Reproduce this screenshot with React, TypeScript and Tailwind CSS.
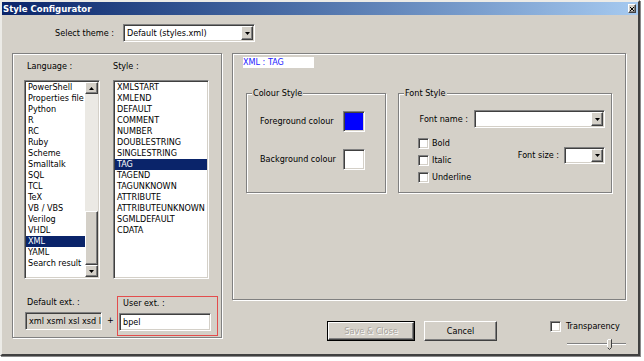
import React from "react";

const SUNKEN =
  "border border-t-[#808080] border-l-[#808080] border-b-white border-r-white shadow-[inset_1px_1px_0_#404040,inset_-1px_-1px_0_#d4d0c8]";
const RAISED =
  "border border-t-white border-l-white border-b-[#404040] border-r-[#404040] shadow-[inset_-1px_-1px_0_#808080]";
const ETCHED =
  "border border-[#808080] shadow-[inset_1px_1px_0_#ffffff,1px_1px_0_#ffffff]";

function Tri({ up = false }: { up?: boolean }) {
  return (
    <svg width="5" height="3" viewBox="0 0 5 3">
      <path d={up ? "M0 3H5L2.5 0Z" : "M0 0H5L2.5 3Z"} fill="#000" />
    </svg>
  );
}

function Combo({ size, text = "" }: { size: string; text?: string }) {
  return (
    <div className={`${SUNKEN} ${size} bg-white flex items-stretch p-[1px]`}>
      <span className="flex-1 pl-[2px] whitespace-nowrap overflow-hidden self-center">{text}</span>
      <div className={`${RAISED} bg-[#d4d0c8] w-[12px] flex items-center justify-center`}>
        <Tri />
      </div>
    </div>
  );
}

function Check() {
  return <div className={`${SUNKEN} bg-white w-[11px] h-[11px] shrink-0`} />;
}

function ListBox({
  size,
  items,
  sel,
  scroll = false,
}: {
  size: string;
  items: string[];
  sel: string;
  scroll?: boolean;
}) {
  return (
    <div className={`${SUNKEN} ${size} bg-white flex p-[1px] overflow-hidden`}>
      <div className="flex-1 flex flex-col overflow-hidden">
        {items.map((it) => (
          <div
            key={it}
            className={`h-[11px] leading-[11px] pl-[2px] whitespace-nowrap ${
              it === sel ? "bg-[#0a246a] text-white" : ""
            }`}
          >
            {it}
          </div>
        ))}
      </div>
      {scroll && (
        <div className="w-[13px] flex flex-col bg-[#ebe9e4]">
          <div className={`${RAISED} bg-[#d4d0c8] h-[12px] flex items-center justify-center`}>
            <Tri up />
          </div>
          <div className="flex-1 flex flex-col justify-end">
            <div className={`${RAISED} bg-[#d4d0c8] h-[54px]`} />
          </div>
          <div className={`${RAISED} bg-[#d4d0c8] h-[12px] flex items-center justify-center`}>
            <Tri />
          </div>
        </div>
      )}
    </div>
  );
}

const LANGS = [
  "PowerShell",
  "Properties file",
  "Python",
  "R",
  "RC",
  "Ruby",
  "Scheme",
  "Smalltalk",
  "SQL",
  "TCL",
  "TeX",
  "VB / VBS",
  "Verilog",
  "VHDL",
  "XML",
  "YAML",
  "Search result",
];

const STYLES = [
  "XMLSTART",
  "XMLEND",
  "DEFAULT",
  "COMMENT",
  "NUMBER",
  "DOUBLESTRING",
  "SINGLESTRING",
  "TAG",
  "TAGEND",
  "TAGUNKNOWN",
  "ATTRIBUTE",
  "ATTRIBUTEUNKNOWN",
  "SGMLDEFAULT",
  "CDATA",
];

export default function App() {
  return (
    <div className="w-[644px] h-[361px] bg-white font-['DejaVu_Sans_Condensed','Liberation_Sans',Arial,sans-serif] text-[9px] leading-[11px] text-black overflow-hidden">
      <div className="w-[640px] h-[356px] bg-[#d4d0c8] border-2 border-t-[#ecebe7] border-l-[#ecebe7] border-r-[#404040] border-b-[#404040] shadow-[1px_1px_0_#8a8a8a] flex flex-col overflow-hidden">
        {/* title bar */}
        <div className="h-[13px] bg-gradient-to-r from-[#0a246a] to-[#a6caf0] flex items-center justify-between pl-[1px] pr-[2px] shrink-0">
          <span className="text-white font-bold text-[9.5px] leading-[13px]">Style Configurator</span>
          <div className={`${RAISED} bg-[#d4d0c8] w-[8px] h-[9px] flex items-center justify-center`}>
            <svg width="4" height="4" viewBox="0 0 4 4">
              <path d="M0 0L4 4M4 0L0 4" stroke="#000" strokeWidth="1" />
            </svg>
          </div>
        </div>

        {/* theme row */}
        <div className="flex items-center mt-[9px] pl-[53px] shrink-0">
          <span className="w-[68px]">Select theme :</span>
          <Combo size="w-[132px] h-[18px]" text="Default (styles.xml)" />
        </div>

        {/* main */}
        <div className="flex gap-[10px] pl-[10px] mt-[11px]">
          {/* left panel */}
          <div className={`${ETCHED} w-[210px] h-[285px] flex flex-col pl-[11px] pt-[7px]`}>
            <div className="flex gap-[13px]">
              <div className="flex flex-col w-[76px]">
                <span className="h-[11px] pl-[3px]">Language :</span>
                <div className="mt-[8px]">
                  <ListBox size="w-[76px] h-[199px]" items={LANGS} sel="XML" scroll />
                </div>
              </div>
              <div className="flex flex-col w-[96px]">
                <span className="h-[11px]">Style :</span>
                <div className="mt-[8px]">
                  <ListBox size="w-[96px] h-[199px]" items={STYLES} sel="TAG" />
                </div>
              </div>
            </div>
            <div className="flex items-start mt-[17px]">
              <div className="flex flex-col w-[77px] ml-[1px] mt-[1px]">
                <span className="h-[11px] pl-[2px]">Default ext. :</span>
                <div
                  className={`${SUNKEN} mt-[4px] w-[77px] h-[18px] bg-[#d4d0c8] pl-[3px] leading-[16px] whitespace-nowrap overflow-hidden`}
                >
                  xml xsml xsl xsd l
                </div>
              </div>
              <span className="ml-[5px] mt-[19px] w-[7px] text-[9px]">+</span>
              <div className="ml-[3px] w-[101px] h-[40px] border border-[#e34d4d] pl-[1px] pt-[1px] flex flex-col">
                <span className="h-[11px] pl-[4px]">User ext. :</span>
                <div className={`${SUNKEN} mt-[4px] w-[92px] h-[18px] bg-white pl-[3px] leading-[16px]`}>
                  bpel
                </div>
              </div>
            </div>
          </div>

          {/* right column */}
          <div className="flex flex-col w-[394px]">
            <div className={`${ETCHED} h-[247px] flex flex-col`}>
              <div className="ml-[10px] mt-[3px] w-[71px] h-[11px] bg-white text-[#2222ff] leading-[11px]">
                XML : TAG
              </div>
              <div className="flex gap-[12px] pl-[13px] mt-[25px]">
                {/* colour style */}
                <div className={`${ETCHED} relative w-[140px] h-[100px] flex flex-col pl-[13px] pt-[17px] gap-[17px]`}>
                  <span className="absolute left-[5px] top-[-6px] px-[1px] bg-[#d4d0c8]">Colour Style</span>
                  <div className="flex items-center">
                    <span className="w-[83px]">Foreground colour</span>
                    <div className={`${SUNKEN} w-[22px] h-[21px] bg-[#0000ff]`} />
                  </div>
                  <div className="flex items-center">
                    <span className="w-[83px]">Background colour</span>
                    <div className={`${SUNKEN} w-[22px] h-[21px] bg-white`} />
                  </div>
                </div>
                {/* font style */}
                <div className={`${ETCHED} relative w-[214px] h-[100px] flex flex-col pt-[16px]`}>
                  <span className="absolute left-[5px] top-[-6px] px-[1px] bg-[#d4d0c8]">Font Style</span>
                  <div className="flex justify-end items-center gap-[6px] pr-[6px]">
                    <span>Font name :</span>
                    <Combo size="w-[131px] h-[18px]" />
                  </div>
                  <div className="flex mt-[10px]">
                    <div className="flex flex-col gap-[6px] pl-[19px]">
                      {["Bold", "Italic", "Underline"].map((l) => (
                        <div key={l} className="flex items-center h-[11px]">
                          <Check />
                          <span className="ml-[3px]">{l}</span>
                        </div>
                      ))}
                    </div>
                    <div className="ml-auto mt-[9px] pr-[6px] flex items-center gap-[5px] self-start">
                      <span>Font size :</span>
                      <Combo size="w-[41px] h-[17px]" />
                    </div>
                  </div>
                </div>
              </div>
            </div>

            {/* bottom row */}
            <div className="flex items-start mt-[21px]">
              <div className="ml-[95px] w-[88px] h-[20px] border border-black flex">
                <div
                  className={`${RAISED} flex-1 flex items-center justify-center text-[#a8a49d] [text-shadow:1px_1px_0_#ffffff]`}
                >
                  Save &amp; Close
                </div>
              </div>
              <div className={`${RAISED} ml-[9px] w-[73px] h-[20px] flex items-center justify-center`}>
                Cancel
              </div>
              <div className="ml-[53px] flex flex-col">
                <div className="flex items-center h-[11px]">
                  <Check />
                  <span className="ml-[5px]">Transparency</span>
                </div>
                <div className="ml-[17px] mt-[7px] w-[59px] h-[11px]">
                  <svg width="59" height="11" viewBox="0 0 59 11">
                    <line x1="0" y1="4.5" x2="59" y2="4.5" stroke="#808080" />
                    <line x1="0" y1="5.5" x2="59" y2="5.5" stroke="#ffffff" />
                    <path d="M40.5 0.5H44.5V8.5L42.5 10.5L40.5 8.5Z" fill="#d4d0c8" stroke="#404040" />
                    <path d="M40.5 8.5V0.5H44" fill="none" stroke="#ffffff" />
                  </svg>
                </div>
              </div>
            </div>
          </div>
        </div>
      </div>
    </div>
  );
}
